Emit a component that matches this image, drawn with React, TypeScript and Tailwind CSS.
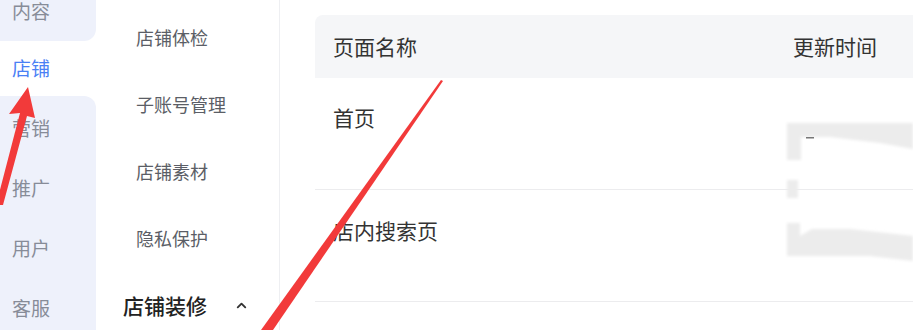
import { ChevronUp } from "lucide-react";

const font = { fontFamily: '"Noto Sans CJK SC", "Noto Sans", sans-serif' };

const subMenu = ["店铺体检", "子账号管理", "店铺素材", "隐私保护"];

const rows = [
  { name: "首页", pad: "pt-[24px]" },
  { name: "店内搜索页", pad: "pt-[25px]" },
];

const App = () => {
  return (
    <div className="relative flex w-[913px] h-[330px] overflow-hidden bg-white" style={font}>
      {/* main nav */}
      <div className="flex flex-col w-[96px] shrink-0 bg-white">
        <div className="h-[59px] -mt-[18px] shrink-0 flex items-center pl-3 bg-[#eef1fb] rounded-br-xl text-[19px] text-[#878c98]">
          内容
        </div>
        <div className="h-[55px] shrink-0 flex items-center pl-3 text-[19px] text-[#4a80f5]">店铺</div>
        <div className="flex-1 bg-[#eef1fb] rounded-tr-xl text-[19px] text-[#878c98]">
          {["营销", "推广", "用户", "客服"].map((t) => (
            <div key={t} className="h-[60px] flex items-center pl-3 pt-[4px]">
              {t}
            </div>
          ))}
        </div>
      </div>

      {/* sub nav */}
      <div className="w-[184px] shrink-0 border-r border-[#eeeff2] pt-[4px]">
        {subMenu.map((t) => (
          <div key={t} className="h-[67px] flex items-center pl-10 text-[18px] text-[#5b5e66]">
            {t}
          </div>
        ))}
        <div className="h-[67px] flex items-center pl-[27px] pr-[30px] justify-between">
          <span className="text-[21px] font-medium text-[#222]">店铺装修</span>
          <ChevronUp size={15} strokeWidth={3} className="text-[#333]" />
        </div>
      </div>

      {/* table */}
      <div className="flex-1 pl-[35px] pt-[15px]">
        <div className="w-[700px] text-[21px] text-[#333]">
          <div className="flex h-[63px] items-center bg-[#f5f6f8] rounded-tl-lg">
            <div className="w-[460px] pl-[18px]">页面名称</div>
            <div className="pl-[18px]">更新时间</div>
          </div>
          {rows.map((r) => (
            <div key={r.name} className={`flex h-[112px] border-b border-[#ececee] ${r.pad}`}>
              <div className="w-[460px] pl-[18px]">{r.name}</div>
              <div className="pl-[18px]" />
            </div>
          ))}
        </div>
      </div>

      {/* redaction smudges and annotation arrows */}
      <svg className="absolute inset-0 pointer-events-none" width="913" height="330">
        <defs>
          <filter id="soft" x="-10%" y="-30%" width="120%" height="160%">
            <feGaussianBlur stdDeviation="1.5" />
          </filter>
        </defs>
        <g fill="#ececec" filter="url(#soft)">
          <polygon points="787,123 913,123 913,149 880,143 830,137 801,137 801,160 787,160" />
          <polygon points="787,180 798,180 798,198 787,198" />
          <polygon points="787,223 800,223 800,236 812,229 850,229 913,236 913,261 870,256 787,256" />
        </g>
        <rect x="806" y="137" width="8" height="1.5" fill="#777" />
        <g fill="#f23a3a">
          <polygon points="28,87 9,114 20,113 -4,205 3,205 27,116 35,118" />
          <polygon points="441,80 443,81 273,330 261,330" />
        </g>
      </svg>
    </div>
  );
};

export default App;
